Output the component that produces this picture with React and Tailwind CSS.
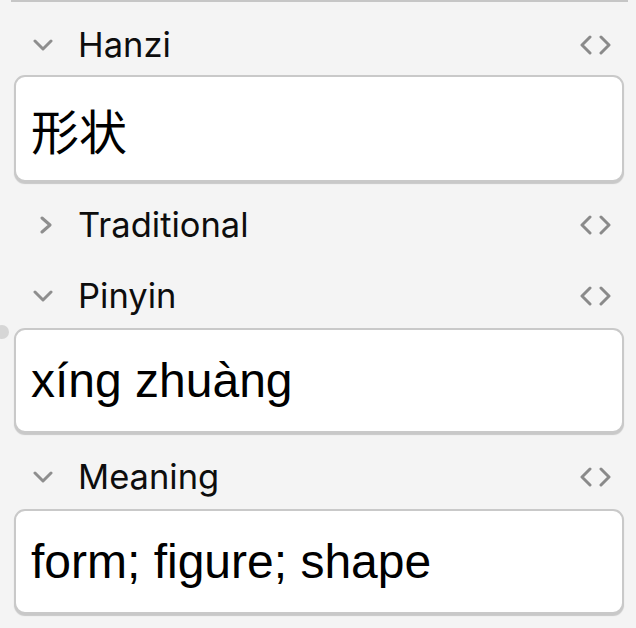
import React from "react";

function ChevronDown() {
  return (
    <svg width="20" height="12" viewBox="0 0 20 12" className="block">
      <path d="M2 2 L10 10 L18 2" fill="none" stroke="#8e8e8e" strokeWidth="3" strokeLinecap="round" strokeLinejoin="round" />
    </svg>
  );
}

function ChevronRight() {
  return (
    <svg width="12" height="18" viewBox="0 0 12 18" className="block">
      <path d="M2 2 L10 9 L2 16" fill="none" stroke="#8e8e8e" strokeWidth="3" strokeLinecap="round" strokeLinejoin="round" />
    </svg>
  );
}

function CodeIcon() {
  return (
    <svg width="34" height="20" viewBox="0 0 34 20" className="block">
      <path d="M11 2 L3 10 L11 18" fill="none" stroke="#8a8a8a" strokeWidth="3" strokeLinecap="round" strokeLinejoin="round" />
      <path d="M22 2 L30 10 L22 18" fill="none" stroke="#8a8a8a" strokeWidth="3" strokeLinecap="round" strokeLinejoin="round" />
    </svg>
  );
}

function Label({ name, open, className }) {
  return (
    <div className={"flex h-[46px] items-center pr-[23px] " + className}>
      <div className="flex w-[78px] justify-start">
        {open ? (
          <div className="ml-[33px]"><ChevronDown /></div>
        ) : (
          <div className="ml-[40px]"><ChevronRight /></div>
        )}
      </div>
      <div className="flex-1 text-[34.5px] leading-none text-[#0d0d0d] [font-family:Inter,'Noto_Sans',sans-serif]">
        {name}
      </div>
      <CodeIcon />
    </div>
  );
}

function Box({ children, className }) {
  return (
    <div
      className={
        "ml-[14px] mr-[12px] flex items-center rounded-[11px] border-2 border-[#c9c9c9] bg-white pl-[15px] shadow-[0_2px_1px_rgba(0,0,0,0.18)] " +
        className
      }
    >
      {children}
    </div>
  );
}

export default function App() {
  return (
    <div className="relative h-[628px] w-[636px] overflow-hidden bg-[#f4f4f4]">
      <div className="ml-[11px] mr-[8px] h-[2px] bg-[#c6c6c6]" />
      <Label name="Hanzi" open className="mt-[20px]" />
      <Box className="mt-[7px] h-[107px]">
        <span className="text-[48px] leading-none text-black [font-family:'Noto_Sans_CJK_SC',sans-serif]">形状</span>
      </Box>
      <Label name="Traditional" open={false} className="mt-[20px]" />
      <Label name="Pinyin" open className="mt-[25px]" />
      <Box className="mt-[9px] h-[105px]">
        <span className="text-[48px] leading-none text-black [font-family:'Liberation_Sans',Arial,sans-serif]">xíng zhuàng</span>
      </Box>
      <Label name="Meaning" open className="mt-[21px]" />
      <Box className="mt-[9px] h-[105px]">
        <span className="text-[48px] leading-none text-black [font-family:'Liberation_Sans',Arial,sans-serif]">form; figure; shape</span>
      </Box>
      <div className="absolute left-[-5px] top-[325px] h-[14px] w-[14px] rounded-full bg-[#d6d6d6]" />
    </div>
  );
}
